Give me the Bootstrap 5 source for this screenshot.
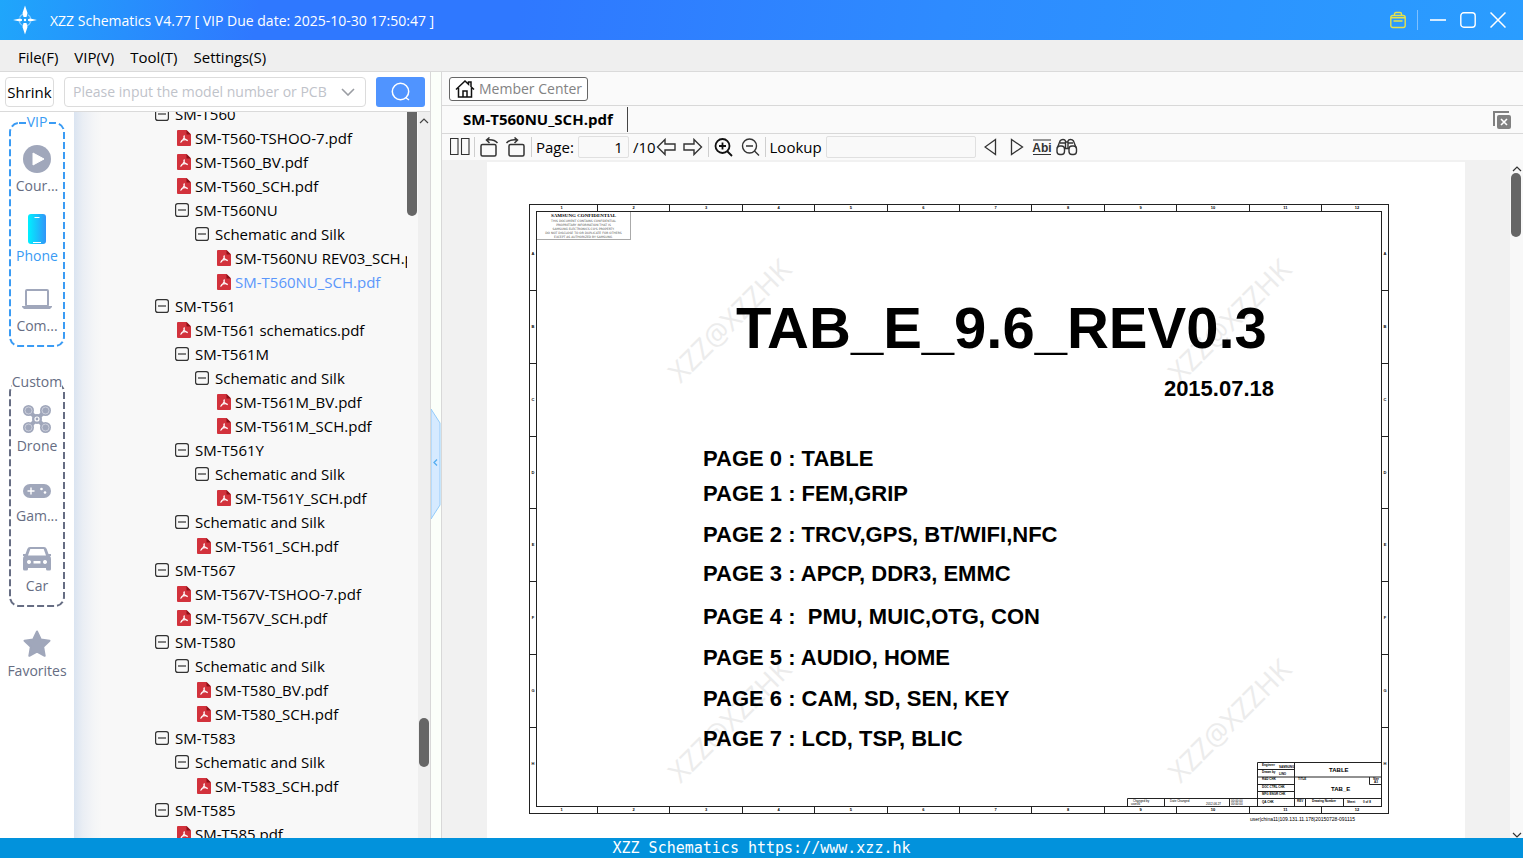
<!DOCTYPE html>
<html lang="en">
<head>
<meta charset="utf-8">
<meta name="viewport" content="width=device-width, initial-scale=1">
<title>XZZ Schematics</title>
<link href="https://cdn.jsdelivr.net/npm/bootstrap@5.3.0/dist/css/bootstrap.min.css" rel="stylesheet">
<style>
body{font-family:"Open Sans","Noto Sans",sans-serif;font-size:15px;line-height:24px;color:#000;background:#fff}
button{color:inherit}
svg{display:block;flex:none}
.titlebar{height:40px;color:#fff;background:linear-gradient(100deg,#1fa6fb 0,#2f78ff 17%,#2f78ff 34%,#2e8bff 62%,#2a9dff 100%)}
.titlebar h1{font-size:14px;line-height:22px;padding-top:2px}
.window-btns{gap:14px;padding-right:17px}
.window-btns .line{width:1px;height:20px;background:#7fc0ff;margin:0 -2px 0 -3px}
.plain{border:0;background:none;padding:0}
.menubar{height:32px;background:#efefef;border-bottom:1px solid #dadada;padding:2px 0 0 18px;gap:16px}
.left-pane{flex:0 0 430px}
.searchrow{height:40px;border-bottom:1px solid #dadada;padding:0 5px}
.shrink-btn{width:49px;height:30px;border:1px solid #dcdcdc;border-radius:4px;background:#fff;font-size:15px}
.searchbox{height:30px;border:1px solid #dcdcdc;border-radius:4px;margin:0 10px}
.searchbox input{border:0;outline:0;padding:0 0 0 8px;width:272px;font-size:14px;color:#000;background:none}
.searchbox input::placeholder{color:#bfc3ca;opacity:1}
.go{width:49px;height:30px;border-radius:3px;background:#5094ff;color:#fff}
.rail{flex:0 0 74px;color:#666d83;font-size:14px;line-height:20px;padding-top:10px}
.rail-group{width:56px;height:225px;margin:0 0 35px 9px;padding-top:20px}
.rail-group + .rail-item{margin-top:-15px}
.rail-group .frame{position:absolute;left:0;top:0;width:100%;height:100%}
.rail-title{position:absolute;top:-10px;left:2px;right:2px;text-align:center}
.rail-title span{background:#fff}
.rail-item{height:70px;color:#666d83;width:100%}
.rail-item i{height:34px;display:flex;align-items:center}
.blue,.rail-item.blue{color:#3a9bf4}
.tree-pane{background:linear-gradient(90deg,#dae4f1 0,#eaeef4 9px,#f4f5f7 20px,#f8f8f8 28px)}
.tree{margin:-10px 0 0;padding-left:81px;width:333px}
.tree li{display:flex;align-items:center;height:24px;white-space:nowrap}
.tree a{color:#000;text-decoration:none}
.tree svg{margin-right:4px}
.tree button{margin-right:6px}
.d1{padding-left:20px}.d2{padding-left:40px}.d3{padding-left:60px}
.file{margin-left:2px}
.tree .open-file a{color:#5b97fb}
.tree-thumb{width:10px;height:104px;background:#666;border-radius:0 0 5px 5px}
.bar-track{width:12px;background:#efefef}
.thumb{position:absolute;left:1px;width:10px;background:#666;border-radius:5px}
.bar-track .thumb{top:606px;height:49px}
.splitter{flex:0 0 11px;margin-right:-1px;z-index:1;background:#fbfffa;border:solid #d8d8d8;border-width:0 1px;padding-top:18px}
.view-row{background:#fafafa;border-bottom:1px solid #d8d8d8}
.member-row{height:34px}
.tab-row{height:28px}
.member{height:24px;border:1px solid #666;border-radius:3px;color:#838383;background:#fff;padding:0 5px;font-size:14px}
.tab-name{border-right:1px solid #444;font-weight:700;padding:0 14px 0 22px;height:25px}
.tools{height:26px;background:#fafafa;padding-left:9px}
.tools .sep{width:1px;height:20px;background:#cfcfcf}
.tools input{height:22px;border:1px solid #e0e0e0;border-radius:2px;background:#f9f9f9;padding:0 5px}
.page-no{width:51px}
.find-box{width:150px}
.canvas-area{background:#f1f1f1}
.sheet{margin:2px 45px 0 46px;padding:42px 76px 40px 42px;background:#fff;z-index:0;min-height:720px}
.drawing{border:1px solid #222;font:bold 4px/6px "Liberation Sans",Arial,sans-serif}
.rule-x{height:6px}
.rule-x span{flex:1 1 0;border-left:1px solid #222;text-align:center}
.rule-x span:first-child{flex:0 0 67px;border-left:0;padding-right:4px}
.rule-x span:last-child{flex:0 0 67px;padding-left:4px}
.rule-y{width:6px;text-align:center}
.rule-y span{flex:1 1 0;border-top:1px solid #222;display:flex;align-items:center;justify-content:center}
.rule-y span:first-child{flex:0 0 79px;border-top:0;padding-top:7px}
.rule-y span:last-child{flex:0 0 80px;padding-bottom:7px}
.drawing-body{border:1px solid #222}
.confidential{width:94px;height:28px;border:solid #aaa;border-width:0 1px 1px 0;white-space:nowrap;text-align:center;color:#555;font:3px/4px "DejaVu Sans",sans-serif;padding-top:1px}
.confidential strong{display:block;font:bold 5px/6px "Liberation Serif",serif;color:#000}
.doc-title{font-weight:700;font-size:58px;line-height:60px;margin:58px 0 0 199px;white-space:nowrap}
.doc-date{font-size:22px;line-height:30px;margin:16px 107px 0 0}
.doc-pages{font-size:22px;line-height:30px;margin:40px 0 0 166px;display:grid;grid-template-rows:35px 41px 39px 43px 41px 41px 40px 82px;white-space:pre}
.title-block{position:absolute;right:-1px;bottom:-1px}
.stamp{position:absolute;z-index:-1;width:180px;line-height:30px;font-size:28px;color:#ececec;text-align:center;transform:rotate(-45deg)}
.foot-note{font:5px/8px "Liberation Sans",sans-serif;padding-right:34px;margin-top:1px}
.view-scroll{width:13px;background:#f8f8f8}
.view-scroll .thumb{top:13px;height:64px}
.statusbar{height:20px;background:#0292dc;color:#fff;font:15px/20px "DejaVu Sans Mono",monospace}
</style>
</head>
<body class="vh-100 d-flex flex-column overflow-hidden">
<svg width="0" height="0" class="position-absolute" aria-hidden="true">
  <symbol id="minus" viewBox="0 0 14 14"><rect x=".6" y=".6" width="12.8" height="12.8" rx="2.2" fill="none" stroke="#333" stroke-width="1.2"/><path d="M3 7h8" stroke="#333" stroke-width="1.2"/></symbol>
  <symbol id="pdf" viewBox="0 0 14 16"><path d="M1 0h8.500L14 4.500V15a1 1 0 0 1-1 1H1a1 1 0 0 1-1-1V1a1 1 0 0 1 1-1z" fill="#d2323c"/><path d="M9.500 0 14 4.500H9.500z" fill="#8e1119"/><path d="M6.800 5.500c1.300 0 0 4-3.300 7M6.800 6c.3 2.200 1.500 4 4 4.800M4.300 10.800c1.500-.9 3.800-1.400 6-1" fill="none" stroke="#fff" stroke-width="1.100"/></symbol>
</svg>

<header class="titlebar d-flex align-items-center flex-shrink-0">
  <svg class="ms-2" width="34" height="32" viewBox="0 0 34 32" fill="#fff"><circle cx="17" cy="16" r="6" fill="none" stroke="#8fd0ff" stroke-width="1.200" stroke-dasharray="5 4.420" stroke-dashoffset="-2.200"/><path d="M17 1.500 19.500 9l-1 4h-3l-1-4zM17 30.500 19.500 23l-1-4h-3l-1 4zM5 16l7-1.500 2 .7v1.600l-2 .7zM29 16l-7-1.500-2 .7v1.600l2 .7z"/><circle cx="17" cy="16" r="1.200"/></svg>
  <h1 class="fw-normal mb-0 ms-2 flex-grow-1">XZZ Schematics V4.77 [ VIP Due date: 2025-10-30 17:50:47 ]</h1>
  <div class="window-btns d-flex align-items-center">
    <button class="plain" aria-label="Toolbox"><svg width="16" height="18" viewBox="0 0 16 18" fill="none" stroke="#e6e24a" stroke-width="1.400"><rect x=".8" y="4.500" width="14.400" height="12" rx="2"/><path d="M4.500 4.500V3a1.500 1.500 0 0 1 1.500-1.500h4A1.500 1.500 0 0 1 11.500 3v1.500M1 6.800h14M3.500 10h9"/></svg></button>
    <span class="line"></span>
    <button class="plain" aria-label="Minimize"><svg width="16" height="16"><path d="M0 8h16" stroke="#fff" stroke-width="1.600"/></svg></button>
    <button class="plain" aria-label="Maximize"><svg width="16" height="16"><rect x=".8" y=".8" width="14.400" height="14.400" rx="3" fill="none" stroke="#fff" stroke-width="1.400"/></svg></button>
    <button class="plain" aria-label="Close"><svg width="16" height="16"><path d="M.5.5l15 15M15.500.5l-15 15" stroke="#fff" stroke-width="1.500"/></svg></button>
  </div>
</header>

<nav class="menubar d-flex align-items-center flex-shrink-0">
  <a href="#" class="text-reset text-decoration-none">File(F)</a>
  <a href="#" class="text-reset text-decoration-none">VIP(V)</a>
  <a href="#" class="text-reset text-decoration-none">Tool(T)</a>
  <a href="#" class="text-reset text-decoration-none">Settings(S)</a>
</nav>

<main class="d-flex flex-grow-1 overflow-hidden">
  <section class="left-pane d-flex flex-column">
    <form class="searchrow d-flex align-items-center flex-shrink-0">
      <button type="button" class="shrink-btn p-0">Shrink</button>
      <div class="searchbox d-flex align-items-center flex-grow-1 overflow-hidden">
        <input type="text" aria-label="Model number" placeholder="Please input the model number or PCB">
        <button type="button" class="plain ms-1" aria-label="History"><svg width="14" height="8" fill="none" stroke="#9a9da3" stroke-width="1.600"><path d="M1 1l6 6 6-6"/></svg></button>
      </div>
      <button type="button" class="plain go d-flex align-items-center justify-content-center" aria-label="Search"><svg width="20" height="20" fill="none" stroke="#fff" stroke-width="1.500"><circle cx="9.500" cy="9.500" r="8.200"/><path d="M14.500 15.500l3.500 2.500"/></svg></button>
    </form>
    <div class="d-flex flex-grow-1 overflow-hidden">
      <nav class="rail">
        <div class="rail-group position-relative">
          <svg class="frame"><rect x="1" y="1" width="54" height="223" rx="9" fill="none" stroke="#3a9bf4" stroke-width="2" stroke-dasharray="7 3"/></svg>
          <div class="rail-title blue"><span>VIP</span></div>
          <button class="plain rail-item position-relative d-flex flex-column align-items-center"><i><svg width="28" height="28"><circle cx="14" cy="14" r="14" fill="#a0a7bb"/><path d="M10 8v12l11-6z" fill="#fff" stroke="#fff" stroke-linejoin="round"/></svg></i><span>Cour...</span></button>
          <button class="plain rail-item blue position-relative d-flex flex-column align-items-center"><i><svg width="18" height="30"><defs><linearGradient id="pg"><stop stop-color="#00f0ff"/><stop offset="1" stop-color="#3195f8"/></linearGradient></defs><rect width="18" height="30" rx="3" fill="url(#pg)"/><path d="M6.500 3.500h5M5 28.500h8" stroke="#fff" stroke-width="1.200"/></svg></i><span>Phone</span></button>
          <button class="plain rail-item position-relative d-flex flex-column align-items-center"><i><svg width="30" height="20"><rect x="4" y="1" width="22" height="16" rx="1" fill="none" stroke="#a0a7bb" stroke-width="2"/><path d="M0 17h11l1 1h6l1-1h11v1l-2 2H2l-2-2z" fill="#a0a7bb"/></svg></i><span>Com...</span></button>
        </div>
        <div class="rail-group position-relative">
          <svg class="frame"><rect x="1" y="1" width="54" height="223" rx="9" fill="none" stroke="#666d83" stroke-width="2" stroke-dasharray="7 3"/></svg>
          <div class="rail-title"><span class="d-inline-block">Custom</span></div>
          <button class="plain rail-item position-relative d-flex flex-column align-items-center"><i><svg width="28" height="28" fill="#a0a7bb"><path d="M6 6l16 16M22 6 6 22" stroke="#a0a7bb" stroke-width="4"/><circle cx="5.500" cy="5.500" r="5.500"/><circle cx="22.500" cy="5.500" r="5.500"/><circle cx="5.500" cy="22.500" r="5.500"/><circle cx="22.500" cy="22.500" r="5.500"/><circle cx="14" cy="14" r="5"/><g fill="none" stroke="#d4d8e2" stroke-width=".8"><circle cx="5.500" cy="5.500" r="3.500"/><circle cx="22.500" cy="5.500" r="3.500"/><circle cx="5.500" cy="22.500" r="3.500"/><circle cx="22.500" cy="22.500" r="3.500"/></g><circle cx="14" cy="14" r="2" fill="none" stroke="#fff" stroke-width="1.200"/></svg></i><span>Drone</span></button>
          <button class="plain rail-item position-relative d-flex flex-column align-items-center"><i class="pt-1"><svg width="28" height="14"><rect width="28" height="14" rx="7" fill="#a0a7bb"/><path d="M8 3.500v7M4.500 7h7" stroke="#fff" stroke-width="1.400"/><circle cx="18.500" cy="5" r="1.300" fill="#fff"/><circle cx="22" cy="8.500" r="1.300" fill="#fff"/></svg></i><span>Gam...</span></button>
          <button class="plain rail-item position-relative d-flex flex-column align-items-center"><i><svg width="28" height="24" fill="#a0a7bb"><path fill-rule="evenodd" d="M7 0h14q2 0 2.700 2l1.800 5H28v2h-1q1 1 1 3v10q0 1.500-1.500 1.500h-2Q23 23.500 23 22v-1H5v1q0 1.500-1.500 1.500h-2Q0 23.500 0 22V12q0-2 1-3H0V7h2.500l1.800-5Q5 0 7 0zm.3 2L5 8.500h18L20.700 2zM6 13a2 2 0 1 0 .01 0zm16 0a2 2 0 1 0 .01 0zM10.500 14v2.500h7V14z"/></svg></i><span>Car</span></button>
        </div>
        <button class="plain rail-item d-flex flex-column align-items-center"><i><svg width="28" height="28" viewBox="0 0 28 28"><path d="M14 1.500l3.800 8 8.700 1.200-6.300 6.200 1.500 8.900L14 21.600l-7.700 4.200 1.500-8.900-6.300-6.200 8.700-1.200z" fill="#a0a7bb" stroke="#a0a7bb" stroke-width="2" stroke-linejoin="round"/></svg></i><span>Favorites</span></button>
      </nav>
      <div class="tree-pane d-flex flex-grow-1 overflow-hidden">
        <ul class="tree list-unstyled overflow-hidden flex-shrink-0">
          <li><button class="plain" aria-label="Collapse"><svg class="me-0" width="14" height="14"><use href="#minus"/></svg></button>SM-T560</li>
          <li class="d1"><svg class="file" width="14" height="16"><use href="#pdf"/></svg><a href="#">SM-T560-TSHOO-7.pdf</a></li>
        </ul>
        <div class="tree-thumb"></div>
        <div class="bar-track position-relative ms-auto">
          <svg class="mx-auto mt-1" width="12" height="10" fill="none" stroke="#444" stroke-width="1.200"><path d="M2 7l4-4 4 4"/></svg>
          <div class="thumb"></div>
        </div>
      </div>
    </div>
  </section>

  <div class="splitter d-flex align-items-center">
    <button class="plain" aria-label="Hide the list"><svg width="10" height="112" viewBox="0 0 10 112"><path d="M0 1l9 14v82L0 111z" fill="#d6eaff" stroke="#94cbfa"/><path d="M6 51.500 3 54.500l3 3" fill="none" stroke="#55aef0" stroke-width="1.300"/></svg></button>
  </div>

  <section class="flex-grow-1 d-flex flex-column overflow-hidden">
    <div class="view-row member-row d-flex align-items-center px-2 flex-shrink-0">
      <button class="member d-flex align-items-center ms-0"><svg width="20" height="20" fill="none" stroke="#111" stroke-width="1.500"><path d="M1 10.500 10 2l3.500 3.300V3h2.500v4.700l3 2.800M3.500 9v9h13V9M8 18v-6h4v6"/></svg><span class="ms-1">Member Center</span></button>
    </div>
    <div class="view-row tab-row d-flex align-items-center justify-content-between pe-2 flex-shrink-0">
      <div class="tab-name">SM-T560NU_SCH.pdf</div>
      <button class="plain me-1" aria-label="Close all"><svg width="18" height="18"><path d="M1 15V1h15" fill="none" stroke="#808080" stroke-width="2"/><rect x="4" y="4" width="14" height="14" rx="2" fill="#808080"/><path d="M8 8l6 6M14 8l-6 6" stroke="#fff" stroke-width="1.600"/></svg></button>
    </div>
    <div class="tools d-flex align-items-center flex-shrink-0">
      <button class="plain" aria-label="Two pages"><svg width="20" height="18" fill="none" stroke="#333" stroke-width="1.100"><path d="M.5.5h7.500v16H.5zM11.500.5H19v16h-7.500z"/></svg></button>
      <span class="sep ms-1"></span>
      <button class="plain ms-1" aria-label="Rotate left"><svg width="22" height="20" fill="none" stroke="#333" stroke-width="1.500"><rect x="2" y="7.500" width="15" height="11.500" rx="1.500"/><path d="M18.500 6Q15 2 8 3M10.500.5 7.500 3l3 3"/></svg></button>
      <button class="plain ms-1" aria-label="Rotate right"><svg width="22" height="20" fill="none" stroke="#333" stroke-width="1.500"><rect x="4" y="7.500" width="15" height="11.500" rx="1.500"/><path d="M1.500 6Q5 2 12 3M9.500.5l3 2.500-3 3"/></svg></button>
      <span class="sep ms-1"></span>
      <label class="ms-1" for="pg-no">Page:</label>
      <input id="pg-no" class="page-no text-end ms-1" value="1">
      <span class="ms-1">/10</span>
      <button class="plain" aria-label="Previous page"><svg width="22" height="18" fill="none" stroke="#333" stroke-width="1.400"><path d="M1.500 9 9 1.500V6h10v6H9v4.500z"/></svg></button>
      <button class="plain ms-1" aria-label="Next page"><svg width="22" height="18" fill="none" stroke="#333" stroke-width="1.400"><path d="M19.500 9 12 1.500V6H2v6h10v4.500z"/></svg></button>
      <span class="sep ms-1"></span>
      <button class="plain ms-1" aria-label="Zoom in"><svg width="20" height="20" fill="none" stroke="#111" stroke-width="1.800"><circle cx="9.500" cy="9" r="7"/><path d="M14 14l5 5M9.500 5.500v7M6 9h7"/></svg></button>
      <button class="plain ms-2" aria-label="Zoom out"><svg width="20" height="20" fill="none" stroke="#333" stroke-width="1.400"><circle cx="8.500" cy="9" r="7"/><path d="M13.500 14l4.500 4.500M5 9h7"/></svg></button>
      <span class="sep ms-1"></span>
      <label class="ms-1" for="find">Lookup</label>
      <input id="find" class="find-box ms-1">
      <button class="plain ms-2" aria-label="Find previous"><svg width="18" height="18" fill="none" stroke="#333" stroke-width="1.300"><path d="M11.500 1.500v15L1 9z"/></svg></button>
      <button class="plain ms-2" aria-label="Find next"><svg width="14" height="18" fill="none" stroke="#333" stroke-width="1.300"><path d="M1.500 1.500v15L12.500 9z"/></svg></button>
      <button class="plain ms-2" aria-label="Match word"><svg width="20" height="18"><path d="M1 2h18M1 16.500h18" stroke="#333"/><text x="10" y="13.500" text-anchor="middle" font-family="Liberation Sans" font-size="12" font-weight="bold" fill="#333">Abi</text></svg></button>
      <button class="plain ms-1" aria-label="Search all"><svg width="22" height="18" fill="none" stroke="#333" stroke-width="1.400"><rect x="1" y="8" width="7.500" height="8.500" rx="3"/><rect x="13" y="8" width="7.500" height="8.500" rx="3"/><path d="M1.500 9.500 4 3q1-1.500 3-1.500T9.500 3v8M20 9.500 17.500 3q-1-1.500-3-1.500T12 3v8M9.500 4H12M8.500 10.500H13M4 5h5M12 5h5"/></svg></button>
    </div>
    <div class="canvas-area d-flex flex-grow-1 overflow-hidden">
      <div class="flex-grow-1">
        <article class="sheet position-relative">
          <span class="stamp" style="left:152px;top:143px">XZZ@XZZHK</span>
          <span class="stamp" style="left:652px;top:143px">XZZ@XZZHK</span>
          <span class="stamp" style="left:152px;top:543px">XZZ@XZZHK</span>
          <span class="stamp" style="left:652px;top:543px">XZZ@XZZHK</span>
          <div class="drawing">
            <div class="rule-x d-flex"><span>1</span><span>2</span><span>3</span><span>4</span><span>5</span><span>6</span><span>7</span><span>8</span><span>9</span><span>10</span><span>11</span><span>12</span></div>
            <div class="d-flex">
              <div class="rule-y d-flex flex-column"><span>A</span><span>B</span><span>C</span><span>D</span><span>E</span><span>F</span><span>G</span><span>H</span></div>
              <div class="drawing-body flex-grow-1 position-relative">
                <div class="confidential"><strong>SAMSUNG CONFIDENTIAL</strong>THIS DOCUMENT CONTAINS CONFIDENTIAL<br>PROPRIETARY INFORMATION THAT IS<br>SAMSUNG ELECTRONICS CO'S PROPERTY.<br>DO NOT DISCLOSE TO OR DUPLICATE FOR OTHERS<br>EXCEPT AS AUTHORIZED BY SAMSUNG.</div>
                <h2 class="doc-title">TAB_E_9.6_REV0.3</h2>
                <div class="doc-date text-end">2015.07.18</div>
                <div class="doc-pages"><span>PAGE 0 : TABLE</span><span>PAGE 1 : FEM,GRIP</span><span>PAGE 2 : TRCV,GPS, BT/WIFI,NFC</span><span>PAGE 3 : APCP, DDR3, EMMC</span><span>PAGE 4 :  PMU, MUIC,OTG, CON</span><span>PAGE 5 : AUDIO, HOME</span><span>PAGE 6 : CAM, SD, SEN, KEY</span><span>PAGE 7 : LCD, TSP, BLIC</span></div>
                <svg class="title-block" width="255" height="45" viewBox="0 0 255 45" font-family="Liberation Sans" font-size="3" font-weight="bold">
                  <path d="M130.500 44V.5H255M130.500 7.500h37M130.500 15h124M130.500 22.500h37M130.500 29.500h37M.5 44v-7.500H255M37.500 37v8M102.500 37v8M167.500 0v45M178.500 37v8M216.500 37v8M242.500 15v7.500H255" fill="none" stroke="#222"/>
                  <text x="135" y="4">Engineer</text><text x="152" y="6">SAMSUNG</text><text x="135" y="11">Drawn by</text><text x="152" y="13">LINO</text><text x="135" y="18">R&amp;D CHK</text><text x="135" y="26">DOC CTRL CHK</text><text x="135" y="33">MFG ENGR CHK</text><text x="135" y="41">QA CHK</text>
                  <text x="171" y="18">TITLE</text><text x="170" y="40">REV</text><text x="185" y="40">Drawing Number</text><text x="220" y="41">Sheet</text><text x="236" y="41">0 of 8</text><text x="246" y="18">Size</text><text x="247" y="21">A3</text>
                  <g font-weight="normal"><text x="6" y="40">Changed by</text><text x="4" y="43">user36</text><text x="43" y="40">Date Changed</text><text x="79" y="43">2012.06.27</text><text x="104" y="40">00:00:00</text><text x="104" y="43">00:00:00</text></g>
                  <text x="202" y="10" font-size="6">TABLE</text><text x="204" y="29" font-size="6">TAB_E</text>
                </svg>
              </div>
              <div class="rule-y d-flex flex-column"><span>A</span><span>B</span><span>C</span><span>D</span><span>E</span><span>F</span><span>G</span><span>H</span></div>
            </div>
            <div class="rule-x d-flex"><span>1</span><span>2</span><span>3</span><span>4</span><span>5</span><span>6</span><span>7</span><span>8</span><span>9</span><span>10</span><span>11</span><span>12</span></div>
          </div>
          <div class="foot-note text-end">user|china11|109.131.11.178|20150728-091115</div>
        </article>
      </div>
      <div class="view-scroll position-relative d-flex flex-column justify-content-between align-items-center pt-1">
        <svg width="12" height="10" fill="none" stroke="#333" stroke-width="1.200"><path d="M2 7l4-4 4 4"/></svg>
        <div class="thumb"></div>
        <svg width="12" height="6" fill="none" stroke="#333" stroke-width="1.200"><path d="M2 1l4 4 4-4"/></svg>
      </div>
    </div>
  </section>
</main>

<footer class="statusbar text-center flex-shrink-0">XZZ Schematics https://www.xzz.hk</footer>

<script src="https://cdn.jsdelivr.net/npm/bootstrap@5.3.0/dist/js/bootstrap.bundle.min.js"></script>
<script>
// Remaining tree rows: [depth, type, label]; f = folder, p = pdf, o = the pdf that is open
const rows = [
  [0,'p','SM-T560_BV.pdf'],[0,'p','SM-T560_SCH.pdf'],[1,'f','SM-T560NU'],[2,'f','Schematic and Silk'],
  [2,'p','SM-T560NU REV03_SCH.pdf'],[2,'o','SM-T560NU_SCH.pdf'],[0,'f','SM-T561'],[0,'p','SM-T561 schematics.pdf'],
  [1,'f','SM-T561M'],[2,'f','Schematic and Silk'],[2,'p','SM-T561M_BV.pdf'],[2,'p','SM-T561M_SCH.pdf'],
  [1,'f','SM-T561Y'],[2,'f','Schematic and Silk'],[2,'p','SM-T561Y_SCH.pdf'],[1,'f','Schematic and Silk'],
  [1,'p','SM-T561_SCH.pdf'],[0,'f','SM-T567'],[0,'p','SM-T567V-TSHOO-7.pdf'],[0,'p','SM-T567V_SCH.pdf'],
  [0,'f','SM-T580'],[1,'f','Schematic and Silk'],[1,'p','SM-T580_BV.pdf'],[1,'p','SM-T580_SCH.pdf'],
  [0,'f','SM-T583'],[1,'f','Schematic and Silk'],[1,'p','SM-T583_SCH.pdf'],[0,'f','SM-T585'],[0,'p','SM-T585.pdf']];
const tree = document.querySelector('.tree');
for (const [depth, type, label] of rows) {
  const folder = type === 'f';
  tree.insertAdjacentHTML('beforeend', `<li class="d${folder ? depth : depth + 1} ${type === 'o' ? 'open-file' : ''}">` + (folder
    ? `<button class="plain" aria-label="Collapse"><svg class="me-0" width="14" height="14"><use href="#minus"/></svg></button>${label}`
    : `<svg class="file" width="14" height="16"><use href="#pdf"/></svg><a href="#">${label}</a>`) + '</li>');
}
</script>
</body>
</html>
